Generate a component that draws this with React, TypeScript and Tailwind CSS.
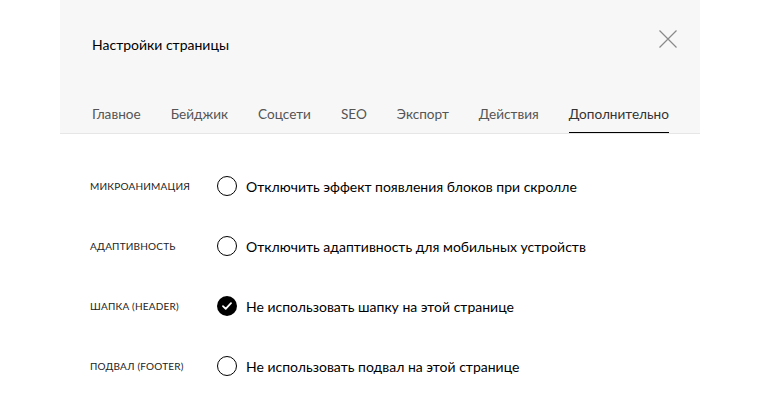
const TABS = ["Главное", "Бейджик", "Соцсети", "SEO", "Экспорт", "Действия", "Дополнительно"];

const OPTIONS = [
  { label: "Микроанимация", text: "Отключить эффект появления блоков при скролле", checked: false },
  { label: "Адаптивность", text: "Отключить адаптивность для мобильных устройств", checked: false },
  { label: "Шапка (header)", text: "Не использовать шапку на этой странице", checked: true },
  { label: "Подвал (footer)", text: "Не использовать подвал на этой странице", checked: false },
];

function Radio({ checked }: { checked: boolean }) {
  if (checked) {
    return (
      <span className="flex h-[20px] w-[20px] shrink-0 items-center justify-center rounded-full bg-black">
        <svg width="10" height="8" viewBox="0 0 10 8" fill="none">
          <path d="M1 4.2 3.7 6.8 9 1.2" stroke="white" strokeWidth="1.8" strokeLinecap="round" strokeLinejoin="round" />
        </svg>
      </span>
    );
  }
  return <span className="h-[20px] w-[20px] shrink-0 rounded-full border-[1.5px] border-black" />;
}

export default function App() {
  return (
    <div className="h-[400px] w-[760px] overflow-hidden bg-white" style={{ fontFamily: "Lato, 'Noto Sans', sans-serif" }}>
      <div className="ml-[60px] w-[640px]">
        <div className="flex h-[134px] flex-col border-b border-[#e6e6e6] bg-[#f7f7f7] px-[32px]">
          <div className="flex items-center justify-between pt-[34px]">
            <span className="text-[14px] text-black">Настройки страницы</span>
            <svg className="mr-[-9px] mt-[-12px]" width="18" height="18" viewBox="0 0 18 18" fill="none">
              <path d="M0.5 0.5 17.5 17.5M17.5 0.5 0.5 17.5" stroke="#8a8a8a" strokeWidth="1.2" />
            </svg>
          </div>
          <div className="mt-auto flex gap-[30px]">
            {TABS.map((t, i) => (
              <span
                key={t}
                className={
                  i === TABS.length - 1
                    ? "border-b border-black pb-[8px] text-[13.6px] text-[#333]"
                    : "pb-[8px] text-[13.6px] text-[#555]"
                }
              >
                {t}
              </span>
            ))}
          </div>
        </div>
        <div className="flex flex-col px-[30px] pt-[22px]">
          {OPTIONS.map((o) => (
            <div key={o.label} className="flex h-[60px] items-center">
              <span className="w-[127px] text-[10px] uppercase tracking-[0.2px] text-[#222]">{o.label}</span>
              <Radio checked={o.checked} />
              <span className="ml-[9px] text-[14px] text-black">{o.text}</span>
            </div>
          ))}
        </div>
      </div>
    </div>
  );
}
